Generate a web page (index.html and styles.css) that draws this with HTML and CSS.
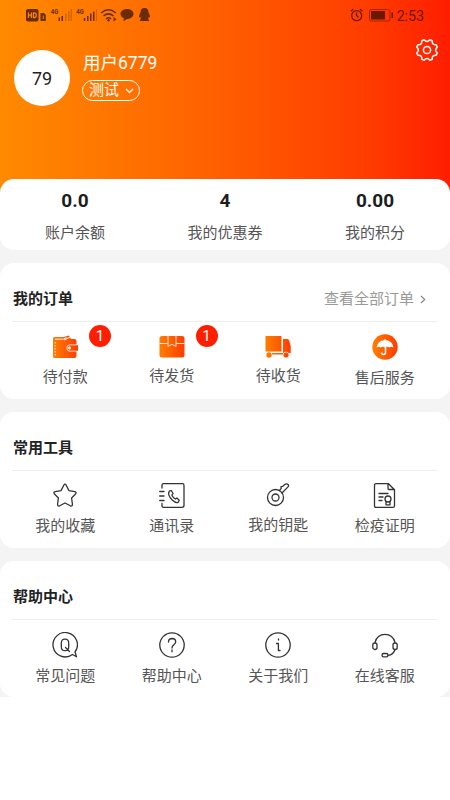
FILE: index.html
```html
<!DOCTYPE html>
<html lang="zh-CN">
<head>
<meta charset="utf-8">
<meta name="viewport" content="width=device-width, initial-scale=1">
<title>我的</title>
<link rel="stylesheet" href="styles.css">
</head>
<body>
<svg class="defs" width="0" height="0" aria-hidden="true">
  <defs>
    <linearGradient id="warm" x1="0" y1="0" x2="26" y2="0" gradientUnits="userSpaceOnUse"><stop offset="0" stop-color="#ff7f00"/><stop offset="1" stop-color="#ff3c00"/></linearGradient>
  </defs>
</svg>
<main class="page">
  <header class="hero">
    <div class="status">
      <svg class="status-left" width="126" height="16" viewBox="0 0 126 16">
        <g fill="#6b2d00">
          <rect x="0" y="1" width="12.500" height="12.500" rx="2"/>
          <path d="M14.500 5h3.500l1.800 2v6h-5.300z"/>
          <path d="M32.500 9.500H34V13h-1.500zM35.500 8h1.500v5h-1.500z"/>
          <path d="M57.800 10h1.500v3h-1.500zM61 8h1.500v5H61zM64 5.500h1.500V13H64zM67 3.500h1.500V13H67z"/>
        </g>
        <g fill="#6b2d00" opacity=".3"><path d="M39 5.500h1.500V13H39zM42 3h1.500v10H42zM44.500 1H46v12h-1.500zM70 1h1v12h-1z"/></g>
        <path d="M17.300 7.500V11" stroke="#ff7d00" fill="none"/>
        <path d="M2.500 4.500V10M5.500 4.500V10M2.500 7.200h3M7.500 4.900v4.700h.8q2 0 2-2.350t-2-2.350z" stroke="#ff8500" stroke-width="1.200" fill="none"/>
        <g fill="none" stroke="#6b2d00" stroke-width="1.500">
          <path d="M75.200 5q7.300-6.500 14.600 0M77.500 8q5-4.200 10 0M80 10.800q2.500-2 5 0"/>
        </g>
        <g fill="#6b2d00">
          <circle cx="82.500" cy="12.300" r="1.200"/><path d="M87.500 9l3 2.200-3 2.200z"/>
          <path d="M101 1c4 0 6.500 2.200 6.500 5s-3 5-6.500 5l-3.500 2.300.3-3.200C95.800 9.300 94.500 7.900 94.500 6c0-2.800 2.500-5 6.500-5z"/>
          <path d="M118.500 0c3 0 4 2 4 4.500 1 1.500 1.800 3.500 1.500 5l-1.200-.6-.6 1.500 1 2.600h-9.400l1-2.600-.6-1.500-1.200.6c-.3-1.500.5-3.500 1.500-5 0-2.500 1-4.500 4-4.500z"/>
        </g>
        <g class="net"><text x="24.800" y="6.200" textLength="7.500" lengthAdjust="spacingAndGlyphs">4G</text><text x="50.300" y="6.200" textLength="7.500" lengthAdjust="spacingAndGlyphs">4G</text></g>
      </svg>
      <div class="status-right">
        <svg width="44" height="14" viewBox="0 0 44 14">
          <g fill="none" stroke="#6b1800" stroke-width="1.300"><circle cx="6.700" cy="7.700" r="5"/><path d="M6.500 4.500v3l2 1.900M.8 3.200l2.500-2M12.500 3.200l-2.500-2"/></g>
          <rect x="19.500" y="1.500" width="20.500" height="11.500" rx="2" fill="none" stroke="#6b1800" opacity=".6"/>
          <path d="M21 3h14v8.500H21zM41.500 4.500h1.500v5.500h-1.500z" fill="#6b1800"/>
        </svg>
        <span>2:53</span>
      </div>
    </div>
    <div class="profile">
      <div class="avatar">79</div>
      <div class="who">
        <div class="name">用户6779</div>
        <div class="tag">测试<svg width="9" height="6" viewBox="0 0 9 6"><path d="M1 1l3.500 3.500L8 1" fill="none" stroke="#fff" stroke-width="1.300"/></svg></div>
      </div>
      <svg class="gear" width="24" height="24" viewBox="-12 -12 24 24">
        <path d="M2.900-10.200L5.200-9.200Q4.900-4.900 9.200-5.200L10.200-2.900Q7 0 10.200 2.900L9.200 5.200Q4.900 4.900 5.200 9.200L2.900 10.200Q0 7-2.900 10.200L-5.200 9.200Q-4.900 4.900-9.200 5.200L-10.200 2.900Q-7 0-10.200-2.900L-9.200-5.200Q-4.900-4.900-5.200-9.200L-2.900-10.200Q0-7 2.900-10.200z"/>
        <circle r="3.600"/>
      </svg>
    </div>
  </header>

  <section class="card stats">
    <div><strong>0.0</strong><span>账户余额</span></div>
    <div><strong>4</strong><span>我的优惠券</span></div>
    <div><strong>0.00</strong><span>我的积分</span></div>
  </section>

  <section class="card">
    <div class="head"><h2>我的订单</h2><a class="more">查看全部订单<svg width="6" height="9" viewBox="0 0 6 9"><path d="M1 1l3.700 3.500L1 8" fill="none" stroke="#888" stroke-width="1.200"/></svg></a></div>
    <div class="grid orders">
      <div class="item">
        <svg width="26" height="25" viewBox="0 0 26 25">
          <path d="M2.500 3h9L17 1.500 19 5h3.500q2 0 2 2v3.500H18a3.500 3.500 0 0 0 0 7h6.500V22q0 2-2 2h-20Q1 24 1 22.500V4.500Q1 3 2.500 3z" fill="url(#warm)"/>
          <path d="M3 5.200h8.500l3-1.600M12 6l6.500-3" stroke="#fff" fill="none"/>
          <path d="M3.200 8v14" stroke="#fff" stroke-dasharray="1.500 1.500"/>
          <path d="M26 11.300h-8a2.700 2.700 0 0 0 0 5.400h8z" fill="url(#warm)"/><circle cx="17.500" cy="14" r="1.400" fill="#fff"/>
        </svg>
        <span>待付款</span><b class="badge">1</b>
      </div>
      <div class="item">
        <svg width="26" height="24" viewBox="0 0 26 24">
          <rect x=".5" y="2" width="25" height="21.500" rx="2.500" fill="url(#warm)"/>
          <path d="M.5 9.500h8.500M17 9.500h8.500M9 2v10.500l4-2.200 4 2.200V2" fill="none" stroke="#ffe0c8" stroke-width="1"/>
        </svg>
        <span>待发货</span><b class="badge">1</b>
      </div>
      <div class="item">
        <svg width="26" height="24" viewBox="0 0 26 24" fill="url(#warm)">
          <path d="M.5 2h16v15.500H.5zM18 5h4.500q1.300 0 1.700 1.500l1.500 5.500v7H18zM7 19h11v1.500H7z"/>
          <circle cx="4" cy="21" r="2.700"/><circle cx="21" cy="21" r="3" stroke="#fff" stroke-width=".7"/>
        </svg>
        <span>待收货</span>
      </div>
      <div class="item">
        <svg width="26" height="26" viewBox="0 0 26 26">
          <circle cx="13" cy="13" r="12.700" fill="url(#warm)"/>
          <path d="M4.500 13.500Q5.500 6.500 12.500 6V5h1v1q7 .5 8 7.500-2.500-1.500-4.200 0-2.200-1.500-4.300 0-2-1.500-4.300 0-1.700-1.500-4.200 0z" fill="#fff"/>
          <path d="M13.500 12.500v6q0 2-2 2t-2-2" fill="none" stroke="#fff" stroke-width="1.500"/>
        </svg>
        <span>售后服务</span>
      </div>
    </div>
  </section>

  <section class="card">
    <div class="head"><h2>常用工具</h2></div>
    <div class="grid line">
      <div class="item">
        <svg width="26" height="25" viewBox="0 0 26 25"><path d="M13 1.200Q13.700 1.200 14.200 2.200L17 7.600 22.800 8.600Q25 9.200 23.500 11L19.600 15 20.400 21Q20.500 23.700 18.300 22.800L13 20 7.700 22.800Q5.500 23.700 5.600 21L6.400 15 2.500 11Q1 9.200 3.200 8.600L9 7.600 11.800 2.200Q12.300 1.200 13 1.200z"/></svg>
        <span>我的收藏</span>
      </div>
      <div class="item">
        <svg width="26" height="25" viewBox="0 0 26 25"><path d="M3 5V2.500Q3 .7 4.500 .7h19Q25 .7 25 2.500v20Q25 24.300 23 24.300H4.500Q3 24.300 3 23v-2.500M.7 8.500H5M.7 13H5M.7 17.500H5"/><path d="M10.300 8.200l2-.7 1.800 3-1.200 1.700q1.200 2.500 3.500 3.800l1.500-1 2.300 2.300-1 2q-2.500 1-6-2.300-5.200-5.300-2.900-8.800z"/></svg>
        <span>通讯录</span>
      </div>
      <div class="item">
        <svg width="26" height="24" viewBox="0 0 26 24"><circle cx="10.500" cy="14.500" r="8"/><circle cx="10.500" cy="14.500" r="3.500"/><path d="M14.500 7.500l1.700-2.200-.2-1.700 1.800-.3 2-1.800q2-1.300 3.500.2.600 1.300-.3 2.200L17 10"/></svg>
        <span>我的钥匙</span>
      </div>
      <div class="item">
        <svg width="26" height="25" viewBox="0 0 26 25"><path d="M14 24.300H4q-1.500 0-1.500-1.500V2.500Q2.500 .7 4 .7h12.500l6 6v16q0 1.600-1.500 1.600h-7M16 1v4.500q0 1 1 1h5.500M7 10.500h9M7 14h4M7 17.500h3"/><circle cx="16" cy="16" r="3"/><path d="M14 18.500v3.300h4v-3.300"/></svg>
        <span>检疫证明</span>
      </div>
    </div>
  </section>

  <section class="card">
    <div class="head"><h2>帮助中心</h2></div>
    <div class="grid line help">
      <div class="item">
        <svg width="26" height="26" viewBox="0 0 26 26"><path d="M20.500 22.500A12.200 12.200 0 1 1 23 20l1.500 4.800z"/><path d="M13 7.200q3.700 0 3.700 4v3.500q0 4-3.700 4t-3.700-4v-3.500q0-4 3.700-4zM13.500 15.500l4 4"/></svg>
        <span>常见问题</span>
      </div>
      <div class="item">
        <svg width="26" height="26" viewBox="0 0 26 26"><circle cx="13" cy="13" r="12.200"/><path d="M9.500 10q0-3.500 3.700-3.500 3.500.2 3.500 3.200 0 1.500-1.700 2.900-2 1.400-2 3.400M13 18v1.800"/></svg>
        <span>帮助中心</span>
      </div>
      <div class="item">
        <svg width="26" height="26" viewBox="0 0 26 26"><circle cx="13" cy="13" r="12.200"/><path d="M13.500 7v1M11.500 11.500h1.900v7h1.600"/></svg>
        <span>关于我们</span>
      </div>
      <div class="item">
        <svg width="26" height="26" viewBox="0 0 26 26"><path d="M3 10.500A10.200 10.200 0 0 1 23 10.500M23 17.500q-1.500 5.500-7 5.800"/><rect x=".8" y="11" width="4.200" height="6.500" rx="2"/><rect x="21" y="11" width="4.200" height="6.500" rx="2"/><rect x="10" y="21.500" width="6" height="3.400" rx="1.700"/></svg>
        <span>在线客服</span>
      </div>
    </div>
  </section>
</main>
</body>
</html>
```

FILE: styles.css
```css
* { box-sizing: border-box; margin: 0; padding: 0; }
body {
  background: #fff;
  color: #555;
  font: 15px/22px Roboto, "Noto Sans CJK SC", sans-serif;
}
svg { display: block; flex: none; }
.defs { position: absolute; }
.page {
  display: flex;
  flex-direction: column;
  gap: 13px;
  height: 697px;
  background: #f4f4f4;
}
.hero {
  height: 210px;
  margin-bottom: -44px;
  background: linear-gradient(90deg, #ff8a00, #ff6a00 37%, #ff5800 55%, #ff3c00 82%, #ff1e00);
}
.status {
  display: flex;
  justify-content: space-between;
  height: 30px;
  padding: 8px 26px 0 26px;
}
.net { font: 700 7.500px Roboto, sans-serif; fill: #6b2d00; }
.status-right {
  display: flex;
  gap: 3px;
  color: #6b1800;
  font-size: 14.200px;
  line-height: 16px;
}
.profile { display: flex; padding: 20px 11px 0 14px; }
.avatar {
  width: 56px;
  height: 56px;
  border-radius: 50%;
  background: #fff;
  color: #222;
  font-size: 18px;
  line-height: 58px;
  text-align: center;
}
.who { flex: 1; padding-left: 12px; color: #fff; }
.name { padding-left: 1px; font-size: 17.500px; line-height: 26px; }
.tag {
  display: flex;
  align-items: center;
  gap: 6px;
  width: 58px;
  height: 21px;
  margin-top: 4px;
  padding-left: 6px;
  border: 1px solid #fff;
  border-radius: 11px;
  font-size: 15px;
  line-height: 21px;
}
.gear { margin-top: -12px; fill: none; stroke: #fff; stroke-width: 1.500; stroke-linejoin: round; }
.card { flex: none; height: 136px; border-radius: 14px; background: #fff; padding: 0 12px; }
.stats {
  display: grid;
  grid-template-columns: repeat(3, 1fr);
  height: 71px;
  padding: 9px 0 0;
  text-align: center;
}
.stats strong {
  display: block;
  color: #1d1d1d;
  font-size: 19px;
  font-weight: 700;
  line-height: 25px;
}
.stats span { display: block; margin-top: 9px; }
.head {
  display: flex;
  align-items: center;
  justify-content: space-between;
  height: 59px;
  padding-top: 14px;
  border-bottom: 1px solid #eee;
}
.head h2 { padding-left: 1px; color: #222; font-size: 15px; font-weight: 700; }
.more { display: flex; align-items: center; gap: 6px; padding-right: 12px; color: #999; }
.grid { display: grid; grid-template-columns: repeat(4, 1fr); padding-top: 12px; }
.item {
  position: relative;
  display: flex;
  flex-direction: column;
  align-items: center;
  gap: 7px;
}
.badge {
  position: absolute;
  top: -9px;
  left: 77px;
  width: 22px;
  height: 22px;
  border-radius: 50%;
  background: #ff1f00;
  color: #fff;
  font-size: 15px;
  font-weight: 400;
  text-align: center;
}
.line svg {
  fill: none;
  stroke: #333;
  stroke-width: 1.300;
  stroke-linecap: round;
  stroke-linejoin: round;
}
```
